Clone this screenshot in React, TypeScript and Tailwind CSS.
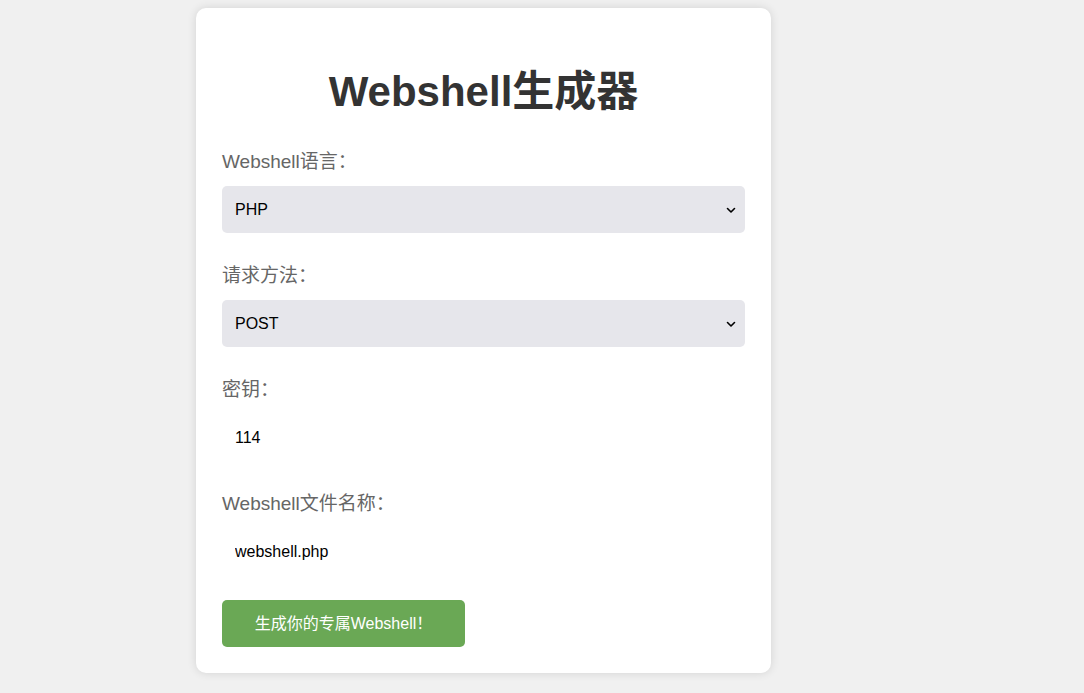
import React from 'react';

const font = { fontFamily: '"Liberation Sans", "Noto Sans CJK SC", sans-serif' };

const Chevron = () => (
  <svg className="pointer-events-none absolute right-[8px] top-1/2 -translate-y-1/2" width="12" height="8" viewBox="0 0 12 8" fill="none">
    <path d="M2.5 2.5l3.5 3.5 3.5-3.5" stroke="#000" strokeWidth={1.6} strokeLinecap="round" strokeLinejoin="round" />
  </svg>
);

const SelectField: React.FC<{ options: string[] }> = ({ options }) => (
  <div className="relative">
    <select
      className="block h-[47px] w-full appearance-none rounded-[5px] bg-[#e6e6eb] pl-[13px] pr-8 text-[16px] text-black outline-none"
      style={font}
      defaultValue={options[0]}
    >
      {options.map((o) => (
        <option key={o}>{o}</option>
      ))}
    </select>
    <Chevron />
  </div>
);

const TextField: React.FC<{ value: string }> = ({ value }) => (
  <input
    className="block h-[47px] w-full rounded-[5px] bg-white px-[13px] text-[16px] text-black outline-none"
    style={font}
    defaultValue={value}
  />
);

const Field: React.FC<{ label: string; last?: boolean; children: React.ReactNode }> = ({ label, last, children }) => (
  <div className={last ? 'mb-[25px]' : 'mb-[31px]'}>
    <label className="mb-[12px] block text-[19px] leading-[24px] text-[#666]">{label}</label>
    {children}
  </div>
);

export default function App() {
  return (
    <div className="min-h-[693px] bg-[#f0f0f0] pl-[196px] pt-[8px]" style={font}>
      <div className="w-[575px] rounded-[10px] bg-white p-[26px] shadow-[0_0_10px_rgba(0,0,0,0.12)]">
        <h1 className="mb-[33px] mt-[33px] text-center text-[42px] font-bold leading-[50px] text-[#333]">Webshell生成器</h1>
        <Field label="Webshell语言：">
          <SelectField options={['PHP', 'ASP', 'JSP']} />
        </Field>
        <Field label="请求方法：">
          <SelectField options={['POST', 'GET']} />
        </Field>
        <Field label="密钥：">
          <TextField value="114" />
        </Field>
        <Field label="Webshell文件名称：" last>
          <TextField value="webshell.php" />
        </Field>
        <button className="h-[47px] w-[243px] rounded-[5px] bg-[#6aa855] text-[16px] text-white">
          生成你的专属Webshell！
        </button>
      </div>
    </div>
  );
}
